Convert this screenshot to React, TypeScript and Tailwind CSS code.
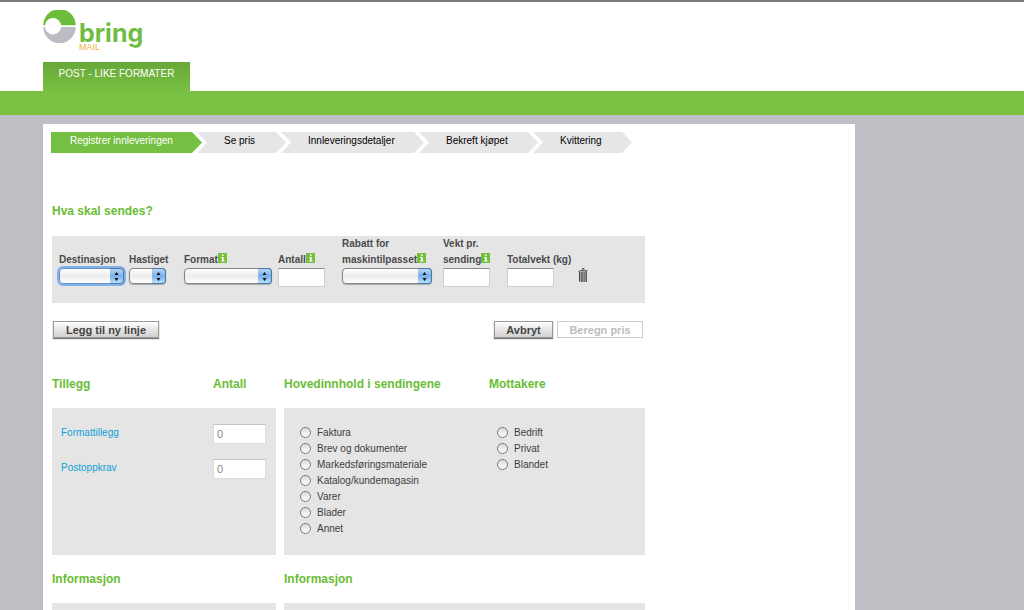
import type { ReactNode } from "react";

const steps = [
  { label: "Registrer innleveringen", width: "w-[151px]", active: true },
  { label: "Se pris", width: "w-[89px]" },
  { label: "Innleveringsdetaljer", width: "w-[143px]" },
  { label: "Bekreft kjøpet", width: "w-[119px]" },
  { label: "Kvittering", width: "w-[99px]" },
];

const contents = [
  "Faktura",
  "Brev og dokumenter",
  "Markedsføringsmateriale",
  "Katalog/kundemagasin",
  "Varer",
  "Blader",
  "Annet",
];

const receivers = ["Bedrift", "Privat", "Blandet"];

const extras = ["Formattillegg", "Postoppkrav"];

function Logo() {
  return (
    <a href="#" aria-label="Bring Mail" className="flex h-[44px] w-[100px]">
      <svg viewBox="0 0 33 33" className="h-[33px] w-[33px] shrink-0">
        <path d="M0.3 15.3A16.2 16.2 0 0 1 32.7 15.3Z" fill="#6cbe3a" />
        <path d="M0.3 17A16.2 16.2 0 0 0 32.7 17Z" fill="#bcbcc4" />
        <circle cx="10" cy="16.2" r="8.2" fill="#fff" />
      </svg>
      <span className="flex flex-col pl-[3px] pt-[13px]">
        <span className="font-['Inter'] text-[25px] font-bold leading-5 text-[#6fbe44]">
          bring
        </span>
        <span className="text-[9px] leading-[8px] text-[#f0b040]">MAIL</span>
      </span>
    </a>
  );
}

function InfoIcon() {
  return (
    <svg viewBox="0 0 9 10" className="mb-[5px] h-[10px] w-[9px] shrink-0">
      <rect width="9" height="10" fill="#74bf3c" />
      <path d="M4 1.5h1.6v1.4H4zM3.2 4h2.4v3.4h1v1.1H3V7.4h1V5H3.2z" fill="#fff" />
    </svg>
  );
}

function TrashIcon() {
  return (
    <svg viewBox="0 0 10 15" className="h-[15px] w-[10px]">
      <path d="M1 3.5h8v10.5H2z" fill="#a5a5a5" />
      <path d="M1.5 4v9.5M4 4v10M8.3 3v11" stroke="#444" strokeWidth="1" />
      <path d="M6.2 4v10" stroke="#666" strokeWidth="1" />
      <path d="M.5 3.5L3 2.5l3 .5 3.5-.5M4.5 2.5V.5h1.5v2" fill="none" stroke="#555" />
    </svg>
  );
}

interface FieldProps {
  id: string;
  label: ReactNode;
  info?: boolean;
  children: ReactNode;
}

function Field({ id, label, info, children }: FieldProps) {
  return (
    <div className="flex flex-col">
      <label
        htmlFor={id}
        className="flex h-8 items-end whitespace-nowrap text-[10px] font-bold leading-4 text-[#4a4a4a]"
      >
        <span>{label}</span>
        {info && <InfoIcon />}
      </label>
      <div className="flex h-5 items-start">{children}</div>
    </div>
  );
}

function Select({ id, width, focused }: { id: string; width: string; focused?: boolean }) {
  return (
    <div className={`relative ${width}`}>
      <select
        id={id}
        className={`block h-4 w-full appearance-none rounded-[4px] border bg-linear-to-b from-white via-[#ececec] to-white outline-none ${
          focused
            ? "border-[#5f92cf] ring-2 ring-[#83b2e6]"
            : "border-[#858585] shadow-[0_1px_1px_#aaaaaa]"
        }`}
      >
        <option value=""></option>
      </select>
      <span className="pointer-events-none absolute inset-y-0 right-0 flex w-[14px] items-center justify-center rounded-r-[4px] border-y border-r border-[#4c78b0] bg-linear-to-b from-[#b7d5f4] via-[#78b0ea] to-[#b8e0fb]">
        <svg viewBox="0 0 5 9" className="h-[9px] w-[5px]">
          <path d="M0.5 3L2.5 0 4.5 3zM0.5 6L2.5 9 4.5 6z" fill="#111" />
        </svg>
      </span>
    </div>
  );
}

function TextBox({ id }: { id: string }) {
  return (
    <input
      id={id}
      type="text"
      className="h-[19px] w-[47px] border border-[#d0d0d0] border-t-[#8a8a8a] bg-white px-1 text-[11px] outline-none"
    />
  );
}

function Heading({ children }: { children: ReactNode }) {
  return <h2 className="text-[12px] font-bold leading-4 text-[#69bd35]">{children}</h2>;
}

function RadioList({ name, items }: { name: string; items: string[] }) {
  return (
    <div className="flex flex-col">
      {items.map((item) => (
        <label key={item} className="flex h-4 items-start gap-[6px] whitespace-nowrap text-[10px] leading-4 text-[#3d3d3d]">
          <input
            type="radio"
            name={name}
            className="mt-[2px] h-[11px] w-[11px] shrink-0 appearance-none rounded-full border border-[#757575] bg-linear-to-b from-[#dcdcdc] to-white checked:bg-[#555555]"
          />
          {item}
        </label>
      ))}
    </div>
  );
}

export default function App() {
  return (
    <div className="flex min-h-screen flex-col bg-[#bebec4] font-['Liberation_Sans',Arial,sans-serif]">
      <header className="border-t-2 border-[#7d7d7d] bg-white">
        <div className="flex flex-col px-[43px] pt-2">
          <Logo />
          <nav className="mt-2 flex">
            <a
              href="#"
              className="h-[29px] w-[147px] bg-linear-to-b from-[#67a838] to-[#78bf43] text-center text-[10px] leading-6 text-white"
            >
              POST - LIKE FORMATER
            </a>
          </nav>
        </div>
        <div className="h-6 bg-[#7ac143]" />
      </header>

      <main className="ml-[43px] mt-[9px] flex w-full max-w-[812px] flex-1 flex-col bg-white pt-2">
        <ol className="flex pl-2">
          {steps.map((step) => (
            <li
              key={step.label}
              className={`h-[21px] shrink-0 whitespace-nowrap text-[10px] leading-[18px] ${step.width} ${
                step.active
                  ? "bg-[#75c043] pl-[19px] text-white [clip-path:polygon(0_0,calc(100%-10px)_0,100%_50%,calc(100%-10px)_100%,0_100%)]"
                  : "-ml-[5px] bg-[#e6e6e6] pl-[27px] text-black [clip-path:polygon(0_0,calc(100%-10px)_0,100%_50%,calc(100%-10px)_100%,0_100%,10px_50%)]"
              }`}
            >
              {step.label}
            </li>
          ))}
        </ol>

        <form className="flex max-w-[602px] flex-1 flex-col pl-[9px] pt-[50px]">
          <Heading>Hva skal sendes?</Heading>

          <section className="mt-[17px] grid h-[67px] grid-cols-[70px_55px_94px_64px_101px_64px_71px_auto] content-start bg-[#e5e5e5] pl-[7px]">
            <Field id="destinasjon" label="Destinasjon">
              <Select id="destinasjon" width="w-[65px]" focused />
            </Field>
            <Field id="hastighet" label="Hastiget">
              <Select id="hastighet" width="w-[37px]" />
            </Field>
            <Field id="format" label="Format" info>
              <Select id="format" width="w-[88px]" />
            </Field>
            <Field id="antall" label="Antall" info>
              <TextBox id="antall" />
            </Field>
            <Field
              id="rabatt"
              label={
                <>
                  Rabatt for
                  <br />
                  maskintilpasset
                </>
              }
              info
            >
              <Select id="rabatt" width="w-[90px]" />
            </Field>
            <Field
              id="vekt"
              label={
                <>
                  Vekt pr.
                  <br />
                  sending
                </>
              }
              info
            >
              <TextBox id="vekt" />
            </Field>
            <Field id="totalvekt" label="Totalvekt (kg)">
              <TextBox id="totalvekt" />
            </Field>
            <button type="button" aria-label="Slett linje" className="self-end justify-self-start pb-[5px]">
              <TrashIcon />
            </button>
          </section>

          <div className="mt-[18px] flex gap-1 pl-px pr-[2px]">
            <button
              type="button"
              className="mr-auto h-[17px] w-[106px] border border-[#9a9a9a] bg-linear-to-b from-white to-[#cfcfcf] text-[11px] font-bold leading-[14px] text-[#444444] shadow-[0_1px_1px_#777777]"
            >
              Legg til ny linje
            </button>
            <button
              type="button"
              className="h-[17px] w-[59px] border border-[#9a9a9a] bg-linear-to-b from-white to-[#cfcfcf] text-[11px] font-bold leading-[14px] text-[#444444] shadow-[0_1px_1px_#777777]"
            >
              Avbryt
            </button>
            <button
              type="button"
              disabled
              className="h-[17px] w-[86px] border border-[#cccccc] bg-white text-[11px] font-bold leading-[14px] text-[#bdbdbd]"
            >
              Beregn pris
            </button>
          </div>

          <div className="mt-[38px] grid flex-1 grid-cols-[224px_1fr] grid-rows-[auto_147px_auto_1fr] gap-x-2">
            <div className="grid grid-cols-[161px_1fr] pb-4">
              <Heading>Tillegg</Heading>
              <Heading>Antall</Heading>
            </div>
            <div className="grid grid-cols-[205px_1fr] pb-4">
              <Heading>Hovedinnhold i sendingene</Heading>
              <Heading>Mottakere</Heading>
            </div>

            <section className="bg-[#e5e5e5] pl-[9px] pt-4">
              {extras.map((extra) => (
                <div key={extra} className="grid h-[35px] grid-cols-[152px_1fr]">
                  <label htmlFor={extra} className="text-[10px] leading-[18px] text-[#0fa0d8]">
                    {extra}
                  </label>
                  <input
                    id={extra}
                    type="text"
                    defaultValue="0"
                    className="h-5 w-[53px] border border-[#dcdcdc] border-t-[#c4c4c4] bg-white px-[3px] text-[11px] leading-4 text-[#8a8a8a] outline-none"
                  />
                </div>
              ))}
            </section>
            <section className="grid grid-cols-[197px_1fr] bg-[#e5e5e5] pl-4 pt-[17px]">
              <RadioList name="innhold" items={contents} />
              <RadioList name="mottakere" items={receivers} />
            </section>

            <div className="py-4">
              <Heading>Informasjon</Heading>
            </div>
            <div className="py-4">
              <Heading>Informasjon</Heading>
            </div>

            <section className="min-h-1 bg-[#e5e5e5]" />
            <section className="min-h-1 bg-[#e5e5e5]" />
          </div>
        </form>
      </main>
    </div>
  );
}
